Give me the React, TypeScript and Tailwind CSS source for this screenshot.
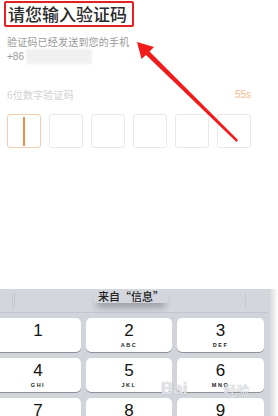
import React from 'react';

const keys = [
  { d: '1', l: '' },
  { d: '2', l: 'ABC' },
  { d: '3', l: 'DEF' },
  { d: '4', l: 'GHI' },
  { d: '5', l: 'JKL' },
  { d: '6', l: 'MNO' },
  { d: '7', l: 'PQRS' },
  { d: '8', l: 'TUV' },
  { d: '9', l: 'WXYZ' },
];

const Key: React.FC<{ d: string; l: string }> = ({ d, l }) => (
  <div className="h-[34px] bg-white rounded-[5px] shadow-[0_1px_0_#8e9196] flex flex-col items-center pt-[5px]">
    <span className="text-[17px] leading-[16px] text-[#111]" style={{ fontFamily: '"Liberation Sans", Arial, sans-serif' }}>
      {d}
    </span>
    <span
      className="text-[5.5px] leading-[8px] font-bold tracking-[1.5px] text-[#222] mt-[2px]"
      style={{ fontFamily: '"Liberation Sans", Arial, sans-serif' }}
    >
      {l}
    </span>
  </div>
);

const App: React.FC = () => {
  return (
    <div
      className="relative w-[278px] h-[416px] overflow-hidden bg-white flex flex-col"
      style={{ fontFamily: '"Noto Sans CJK SC", "Noto Sans", sans-serif' }}
    >
      <div className="pl-[7px] pr-[27px]">
        <h1 className="mt-[3px] pl-[1px] text-[17px] leading-[22px] font-medium text-[#2a2a2a]">请您输入验证码</h1>
        <p className="mt-[10px] text-[10px] leading-[13px] text-[#9a9a9a] tracking-[0.2px]">验证码已经发送到您的手机</p>
        <div className="flex items-center h-[15px] mt-[1px]">
          <span className="text-[10px] leading-[13px] text-[#9a9a9a]" style={{ fontFamily: '"Liberation Sans", Arial, sans-serif' }}>
            +86
          </span>
          <div className="ml-[2px] w-[66px] h-[15px] bg-[#f0f0f0] blur-[1px]" />
        </div>

        <div className="mt-[25px] flex items-center justify-between h-[12px]">
          <span className="text-[10px] leading-[12px] text-[#d0d0d0] tracking-[0.2px]">6位数字验证码</span>
          <span className="text-[10px] leading-[12px] text-[#f3b98e]" style={{ fontFamily: '"Liberation Sans", Arial, sans-serif' }}>
            55s
          </span>
        </div>

        <div className="mt-[13px] flex gap-[8px]">
          <div className="w-[34px] h-[34px] rounded-[3px] border border-[#f5cdb0] flex items-center justify-center">
            <div className="w-[1.5px] h-[29px] bg-[#ef8a4f]" />
          </div>
          {[0, 1, 2, 3, 4].map((i) => (
            <div key={i} className="w-[34px] h-[34px] rounded-[3px] border border-[#e8e8e8]" />
          ))}
        </div>
      </div>

      <div className="mt-auto h-[127px] flex">
        <div className="w-[268px] bg-[#d1d4da] flex flex-col overflow-hidden">
          <div className="relative h-[32px] bg-[#d3d6dc] border-b border-[#c3c6cc] flex items-center justify-center">
            <div className="absolute left-[12px] top-[4px] bottom-[4px] w-[3px] border-x border-[#c4c7cd]" />
            <div className="absolute left-[245px] top-[4px] bottom-[4px] w-px bg-[#c4c7cd]" />
            <span className="text-[11px] leading-[14px] font-medium text-[#222] px-[4px] shadow-[0_7px_7px_-3px_rgba(0,0,0,0.3)] mb-[9px] mr-[6px]">
              来自“信息”
            </span>
          </div>
          <div className="ml-[-5px] mr-[4px] mt-[5px] grid grid-cols-[86px_86px_87px] gap-x-[5px] gap-y-[6px]">
            {keys.map((k) => (
              <Key key={k.d} d={k.d} l={k.l} />
            ))}
          </div>
        </div>
        <div className="w-[10px] bg-gradient-to-r from-[#cdd0d5] to-white" />
      </div>

      {/* Baidu watermark */}
      <div className="absolute left-[161px] top-[380px] flex items-end gap-[2px] pointer-events-none text-white/70 [text-shadow:0_0_1px_#9ba0a8]">
        <span className="text-[17px] leading-[18px] font-bold" style={{ fontFamily: '"Liberation Sans", Arial, sans-serif' }}>
          Bai
        </span>
        <span className="text-[13px] leading-[16px] ml-[34px]">经验</span>
      </div>

      {/* annotations */}
      <div className="absolute left-[4px] top-[1px] w-[130px] h-[26px] border-2 border-[#e5201f] rounded-[2px] pointer-events-none" />
      <svg className="absolute inset-0 pointer-events-none" width="278" height="416" viewBox="0 0 278 416">
        <polygon points="137,42 154,47 149.5,51.5 238,140 236.5,142 146,55 141.5,59" fill="#f21b1b" />
      </svg>
    </div>
  );
};

export default App;
